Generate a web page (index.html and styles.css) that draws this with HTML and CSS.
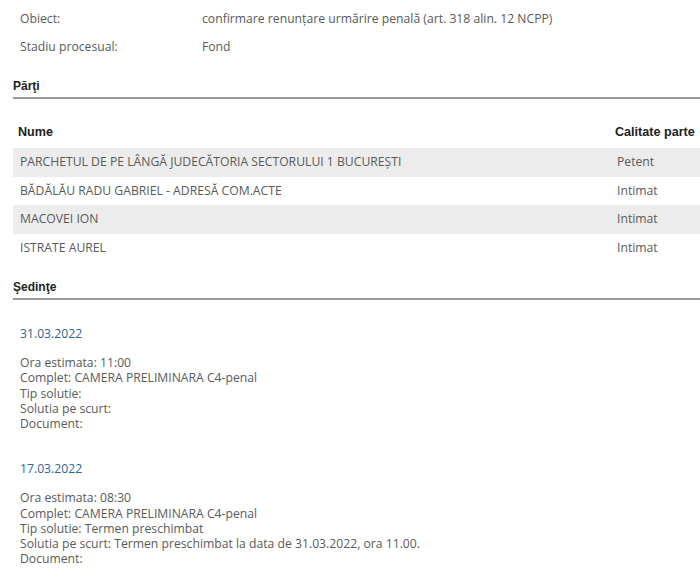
FILE: index.html
```html
<!DOCTYPE html>
<html lang="ro">
<head>
<meta charset="utf-8">
<title>Dosar</title>
<link rel="stylesheet" href="styles.css">
</head>
<body>
<div class="page">
  <div class="info">
    <div class="info-row"><span class="info-label">Obiect:</span><span class="info-value">confirmare renunțare urmărire penală (art. 318 alin. 12 NCPP)</span></div>
    <div class="info-row"><span class="info-label">Stadiu procesual:</span><span class="info-value">Fond</span></div>
  </div>

  <h2 class="section-title section-parti">Părţi</h2>
  <table class="parti">
    <thead>
      <tr><th class="col-nume">Nume</th><th class="col-calitate">Calitate parte</th></tr>
    </thead>
    <tbody>
      <tr class="alt"><td>PARCHETUL DE PE LÂNGĂ JUDECĂTORIA SECTORULUI 1 BUCUREȘTI</td><td>Petent</td></tr>
      <tr><td>BĂDĂLĂU RADU GABRIEL - ADRESĂ COM.ACTE</td><td>Intimat</td></tr>
      <tr class="alt"><td>MACOVEI ION</td><td>Intimat</td></tr>
      <tr><td>ISTRATE AUREL</td><td>Intimat</td></tr>
    </tbody>
  </table>

  <h2 class="section-title section-sedinte">Şedinţe</h2>
  <div class="sedinte">
    <div class="sedinta">
      <a class="sedinta-date" href="#">31.03.2022</a>
      <div class="sedinta-details">
        <div>Ora estimata: 11:00</div>
        <div>Complet: CAMERA PRELIMINARA C4-penal</div>
        <div>Tip solutie:</div>
        <div>Solutia pe scurt:</div>
        <div>Document:</div>
      </div>
    </div>
    <div class="sedinta">
      <a class="sedinta-date" href="#">17.03.2022</a>
      <div class="sedinta-details">
        <div>Ora estimata: 08:30</div>
        <div>Complet: CAMERA PRELIMINARA C4-penal</div>
        <div>Tip solutie: Termen preschimbat</div>
        <div>Solutia pe scurt: Termen preschimbat la data de 31.03.2022, ora 11.00.</div>
        <div>Document:</div>
      </div>
    </div>
  </div>
</div>
</body>
</html>
```
FILE: styles.css
```css
html, body {
  margin: 0;
  padding: 0;
  background: #ffffff;
  overflow: hidden;
}

body {
  font-family: "Open Sans", "DejaVu Sans", sans-serif;
  font-size: 12.2px;
  color: #5a5a5a;
}

.page {
  padding: 4px 0 0 13px;
  width: 687px;
}

.info-row {
  display: flex;
  align-items: center;
  height: 28px;
  padding-left: 7px;
}

.info-label {
  width: 182px;
  flex: none;
}

.section-title {
  margin: 0;
  font-family: "Liberation Sans", Arial, sans-serif;
  font-weight: bold;
  font-size: 12px;
  line-height: 16px;
  color: #222222;
  padding-bottom: 3px;
  border-bottom: 2px solid #9a9a9a;
}

.section-parti {
  margin-top: 18px;
}

.section-sedinte {
  margin-top: 17px;
}

.parti {
  border-collapse: collapse;
  width: 700px;
}

.parti th {
  font-family: "Liberation Sans", Arial, sans-serif;
  font-weight: bold;
  font-size: 12.6px;
  color: #222222;
  text-align: left;
  vertical-align: bottom;
  height: 41px;
  padding: 0 0 8px 5px;
  line-height: 16px;
}

.parti .col-nume {
  width: 592px;
}

.parti td {
  height: 28.5px;
  padding: 0 0 0 7px;
  line-height: 16px;
  white-space: nowrap;
}

.parti tr.alt td {
  background: #ececec;
}

.sedinte {
  display: flex;
  flex-direction: column;
  gap: 30px;
  padding-left: 7px;
  margin-top: 26px;
}

.sedinta-date {
  display: block;
  color: #2a6592;
  text-decoration: none;
  line-height: 16px;
}

.sedinta-details {
  margin-top: 13px;
  line-height: 15.25px;
}
```
